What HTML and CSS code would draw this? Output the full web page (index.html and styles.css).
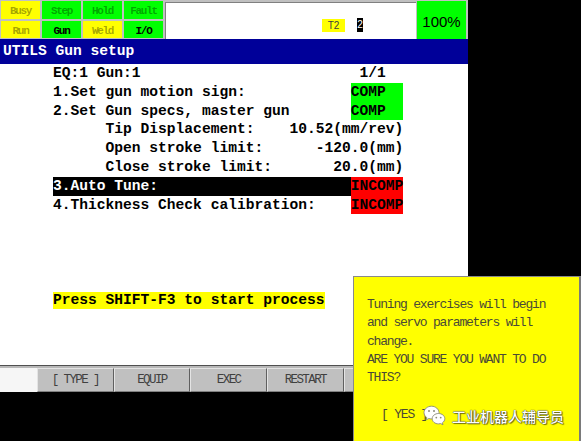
FILE: index.html
```html
<!DOCTYPE html>
<html>
<head>
<meta charset="utf-8">
<link rel="stylesheet" href="styles.css">
</head>
<body>
<div class="screen">
  <div class="topbar">
    <div class="status">
      <div class="cell y dim">Busy</div>
      <div class="cell g dim">Step</div>
      <div class="cell g dim">Hold</div>
      <div class="cell g dim">Fault</div>
      <div class="cell y dim">Run</div>
      <div class="cell g on">Gun</div>
      <div class="cell y dim">Weld</div>
      <div class="cell g on">I/O</div>
    </div>
    <div class="msg">
      <span class="tbox">T2</span>
      <span class="nbox">2</span>
    </div>
    <div class="ovr">100%</div>
  </div>
  <div class="title">UTILS Gun setup</div>
  <div class="content">
    <div class="row">EQ:1 Gun:1                         1/1</div>
    <div class="row">1.Set gun motion sign:            <span class="st comp">COMP  </span></div>
    <div class="row">2.Set Gun specs, master gun       <span class="st comp">COMP  </span></div>
    <div class="row">      Tip Displacement:    10.52(mm/rev)</div>
    <div class="row">      Open stroke limit:      -120.0(mm)</div>
    <div class="row">      Close stroke limit:       20.0(mm)</div>
    <div class="row"><span class="st sel">3.Auto Tune:                      </span><span class="st incomp">INCOMP</span></div>
    <div class="row">4.Thickness Check calibration:    <span class="st incomp">INCOMP</span></div>
    <div class="row prompt"><span class="hl">Press SHIFT-F3 to start process</span></div>
  </div>
  <div class="fkeys">
    <div class="fpad"></div>
    <div class="fkey">[ TYPE ]</div>
    <div class="fkey">EQUIP</div>
    <div class="fkey">EXEC</div>
    <div class="fkey">RESTART</div>
    <div class="fkey"></div>
  </div>
</div>
<div class="dialog">
  <div class="dtext">
    <div class="dl">Tuning exercises will begin</div>
    <div class="dl">and servo parameters will</div>
    <div class="dl">change.</div>
    <div class="dl">ARE YOU SURE YOU WANT TO DO</div>
    <div class="dl">THIS?</div>
    <div class="dl yes">[ YES ]</div>
  </div>
  <div class="wm">
    <svg class="wx" width="23" height="21" viewBox="0 0 23 21">
      <path d="M8.5 1.2C4.4 1.2 1 4 1 7.6c0 2 1.1 3.8 2.8 5l-0.7 2.3 2.7-1.4c0.9 0.3 1.8 0.4 2.7 0.4 4.1 0 7.5-2.9 7.5-6.3S12.6 1.2 8.5 1.2z" fill="#fff" stroke="#8a8a7a" stroke-width="0.9"/>
      <circle cx="6" cy="6" r="1" fill="#8a8a7a"/>
      <circle cx="11" cy="6" r="1" fill="#8a8a7a"/>
      <path d="M15.5 8.5c-3.5 0-6.3 2.3-6.3 5.2s2.8 5.2 6.3 5.2c0.8 0 1.5-0.1 2.2-0.3l2.3 1.2-0.6-2c1.5-1 2.4-2.5 2.4-4.1 0-2.9-2.8-5.2-6.3-5.2z" fill="#fff" stroke="#8a8a7a" stroke-width="0.9"/>
      <circle cx="13.3" cy="12.6" r="0.9" fill="#8a8a7a"/>
      <circle cx="17.7" cy="12.6" r="0.9" fill="#8a8a7a"/>
    </svg>
    <span class="wmtext">工业机器人辅导员</span>
  </div>
</div>
</body>
</html>
```
FILE: styles.css
```css
body {
  margin: 0;
  width: 581px;
  height: 441px;
  overflow: hidden;
  position: relative;
  background: #000;
  font-family: "Liberation Mono", monospace;
}

.screen {
  width: 468px;
  display: flex;
  flex-direction: column;
}

.topbar {
  height: 39px;
  background: #c0c0c0;
  display: flex;
  align-items: flex-start;
}

.status {
  display: grid;
  grid-template-columns: repeat(4, 39px);
  grid-template-rows: 18px 17px;
  gap: 2px;
  padding: 1px 0 0 1px;
}

.cell {
  display: flex;
  align-items: center;
  justify-content: center;
  padding-top: 2px;
  box-sizing: border-box;
  font: bold 11px "Liberation Mono", monospace;
  letter-spacing: -1.3px;
}

.y { background: #ffff00; }
.g { background: #00ff00; }
.dim { color: rgba(0, 0, 0, 0.36); }
.on { color: #000; }

.msg {
  width: 251px;
  height: 37px;
  margin: 2px 0 0 2px;
  box-sizing: border-box;
  background: #fff;
  border-top: 1px solid #808080;
  border-left: 1px solid #808080;
  display: flex;
  align-items: flex-start;
  gap: 12px;
  padding: 16px 0 0 156px;
}

.tbox {
  width: 23px;
  height: 13px;
  background: #ffff00;
  color: #404040;
  font: 10px/13px "Liberation Sans", sans-serif;
  text-align: center;
}

.nbox {
  width: 6px;
  height: 14px;
  margin-top: -1px;
  background: #000;
  color: #fff;
  font: 10px/14px "Liberation Sans", sans-serif;
  text-align: center;
}

.ovr {
  width: 49px;
  height: 38px;
  margin: 1px 0 0 1px;
  box-sizing: border-box;
  padding-top: 3px;
  background: #00ff00;
  display: flex;
  align-items: center;
  justify-content: center;
  font: 15px "Liberation Sans", sans-serif;
  color: #000;
}

.title {
  height: 25px;
  background: #000099;
  color: #fff;
  padding-left: 3px;
  font: bold 14.6px/25px "Liberation Mono", monospace;
  white-space: pre;
}

.content {
  height: 301px;
  box-sizing: border-box;
  background: #fff;
  padding-left: 53px;
  font: bold 14.6px/18.8px "Liberation Mono", monospace;
  color: #000;
}

.row {
  white-space: pre;
  height: 18.8px;
}

.st {
  display: inline-block;
  vertical-align: top;
  height: 18.8px;
}

.comp { background: #00ff00; }
.incomp { background: #ff0000; }
.sel { background: #000; color: #fff; }

.prompt {
  margin-top: 77.3px;
}

.hl {
  display: inline-block;
  vertical-align: top;
  height: 17.5px;
  line-height: 17.5px;
  background: #ffff00;
}

.fkeys {
  height: 27px;
  box-sizing: border-box;
  border-top: 1px solid #505050;
  padding-top: 2px;
  background: #b8b8b8;
  display: flex;
}

.fpad {
  width: 37px;
  background: #f6f6f6;
}

.fkey {
  width: 76.67px;
  flex: none;
  box-sizing: border-box;
  background: #c0c0c0;
  border-top: 1px solid #e4e4e4;
  border-left: 1px solid #e4e4e4;
  border-right: 1px solid #606060;
  border-bottom: 1px solid #808080;
  display: flex;
  align-items: center;
  justify-content: center;
  color: #404040;
  font: 12.5px "Liberation Mono", monospace;
  letter-spacing: -1.6px;
  white-space: pre;
}

.dialog {
  position: absolute;
  left: 353px;
  top: 276px;
  width: 228px;
  height: 165px;
  box-sizing: border-box;
  background: #ffff00;
  border-top: 1px solid #8a8a8a;
  border-left: 1px solid #8a8a8a;
  border-right: 2px solid #7a7a7a;
  padding: 19px 0 0 13px;
}

.dtext {
  display: flex;
  flex-direction: column;
  align-items: flex-start;
  font: 13px/18.3px "Liberation Mono", monospace;
  letter-spacing: -1.2px;
  color: #4a4a36;
}

.dl {
  white-space: pre;
}

.yes {
  margin: 18.3px 0 0 14px;
}

.wm {
  position: absolute;
  left: 69px;
  top: 128px;
  display: flex;
  align-items: center;
  gap: 6px;
}

.wx { display: block; }

.wmtext {
  font: 500 14px/20px "Noto Sans CJK SC", sans-serif;
  color: #fff;
  text-shadow: 0 0 1px #333, 0 0 1px #333, 1px 1px 1px rgba(0, 0, 0, 0.5);
}
```
